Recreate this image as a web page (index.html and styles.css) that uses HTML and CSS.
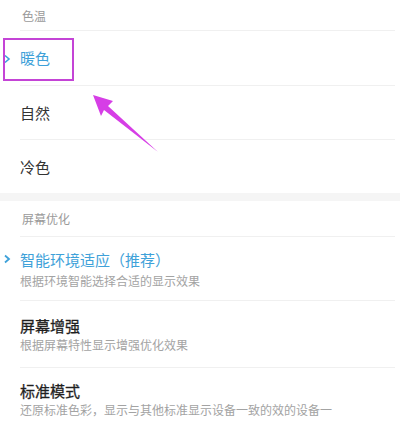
FILE: index.html
```html
<!DOCTYPE html>
<html lang="zh-CN">
<head>
<meta charset="utf-8">
<link rel="stylesheet" href="styles.css">
</head>
<body>
<div class="page">
  <div class="header h1">色温</div>
  <div class="divider"></div>
  <div class="row r-warm">
    <span class="chev"><svg width="8" height="10" viewBox="0 0 8 10"><polyline points="2,1.5 6,5 2,8.5" fill="none" stroke="#3ea1d9" stroke-width="1.6"/></svg></span>
    <span class="title active">暖色</span>
  </div>
  <div class="divider"></div>
  <div class="row r-std"><span class="title">自然</span></div>
  <div class="divider"></div>
  <div class="row r-std"><span class="title">冷色</span></div>
  <div class="band"></div>
  <div class="header h2">屏幕优化</div>
  <div class="divider"></div>
  <div class="row2 p13">
    <span class="chev chev2"><svg width="8" height="10" viewBox="0 0 8 10"><polyline points="2,1.5 6,5 2,8.5" fill="none" stroke="#3ea1d9" stroke-width="1.8"/></svg></span>
    <div class="title active">智能环境适应（推荐）</div>
    <div class="sub">根据环境智能选择合适的显示效果</div>
  </div>
  <div class="divider"></div>
  <div class="row2 p15 h66">
    <div class="title dark">屏幕增强</div>
    <div class="sub s1">根据屏幕特性显示增强优化效果</div>
  </div>
  <div class="divider"></div>
  <div class="row2 p13">
    <div class="title dark">标准模式</div>
    <div class="sub s1">还原标准色彩，显示与其他标准显示设备一致的效的设备一</div>
  </div>
</div>
<div class="box"></div>
<svg class="arrow" width="400" height="423" viewBox="0 0 400 423">
  <polygon points="93,95 113,101 108,106 158,152 104,110 101,116" fill="#d63ee6"/>
</svg>
</body>
</html>
```

FILE: styles.css
```css
html, body {
  margin: 0;
  padding: 0;
  background: #ffffff;
}
body {
  width: 400px;
  height: 423px;
  overflow: hidden;
  position: relative;
  font-family: "Noto Sans CJK SC", "Noto Sans", sans-serif;
}
.page {
  display: flex;
  flex-direction: column;
}
.header {
  font-size: 12px;
  color: #9a9a9a;
  padding-left: 22px;
  display: flex;
  align-items: center;
}
.h1 { height: 30px; }
.h2 { height: 35px; }
.divider {
  height: 1px;
  background: #f0f0f0;
  margin-left: 20px;
  margin-right: 5px;
}
.band {
  height: 8px;
  background: #f5f5f5;
}
.row {
  position: relative;
  display: flex;
  align-items: center;
  padding-left: 20px;
  height: 53px;
}
.r-warm { height: 54px; }
.title {
  font-size: 15px;
  line-height: 20px;
  color: #333333;
}
.title.dark { font-weight: 400; color: #1f1f1f; -webkit-text-stroke: 0.3px #1f1f1f; }
.title.active { color: #3ea1d9; }
.chev {
  position: absolute;
  left: 3px;
  top: 50%;
  margin-top: -4px;
  display: flex;
}
.row2 {
  position: relative;
  padding-left: 20px;
  height: 50px;
  display: flex;
  flex-direction: column;
}
.p13 { padding-top: 13px; }
.p15 { padding-top: 15px; height: 51px; }
.chev2 { top: 17px; margin-top: 0; }
.sub {
  font-size: 12px;
  line-height: 16px;
  color: #a3a3a3;
  margin-top: 3px;
  white-space: nowrap;
}
.sub.s1 { margin-top: 1px; }
.box {
  position: absolute;
  left: 3px;
  top: 38px;
  width: 67px;
  height: 39px;
  border: 2px solid #c444d6;
}
.arrow {
  position: absolute;
  left: 0;
  top: 0;
}
```
